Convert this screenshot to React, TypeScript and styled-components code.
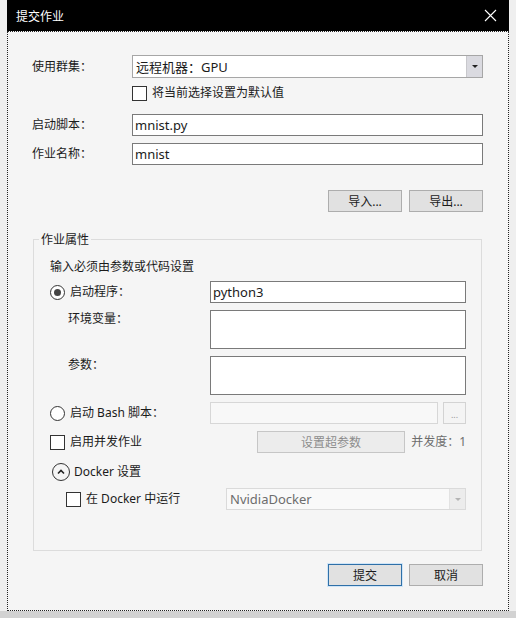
import React from "react";
import styled, { createGlobalStyle } from "styled-components";

const Global = createGlobalStyle`
  html, body { margin: 0; padding: 0; }
  body {
    width: 516px;
    height: 618px;
    overflow: hidden;
    background: linear-gradient(to bottom, #efefef 0, #efefef 611px, #d2d2d2 611px);
    font-family: "Noto Sans", "Noto Sans CJK SC", sans-serif;
    font-size: 12px;
    color: #1b1b1b;
  }
  * { box-sizing: border-box; }
`;

const Page = styled.div`
  padding-left: 7px;
  height: 618px;
`;

const Window = styled.div`
  width: 502px;
  display: flex;
  flex-direction: column;
`;

const TitleBar = styled.div`
  height: 31px;
  background: #000;
  display: flex;
  align-items: center;
  justify-content: space-between;
  padding: 0 12px 0 9px;
  color: #fff;
  font-size: 12px;
`;

const Body = styled.div`
  height: 580px;
  background: #f5f5f5;
  border: 1px dotted #222;
  padding: 23px 25px 0 24px;
  display: flex;
  flex-direction: column;
`;

const FormRow = styled.div<{ $mt?: number }>`
  display: flex;
  align-items: center;
  margin-top: ${(p) => p.$mt ?? 0}px;
`;

const Label = styled.div<{ $w?: number }>`
  width: ${(p) => p.$w ?? 100}px;
  flex: none;
  line-height: 16px;
  white-space: nowrap;
`;

const Combo = styled.div<{ $disabled?: boolean; $w?: number }>`
  height: ${(p) => (p.$disabled ? 22 : 23)}px;
  width: ${(p) => (p.$w ? `${p.$w}px` : "auto")};
  flex: ${(p) => (p.$w ? "none" : "1")};
  display: flex;
  align-items: stretch;
  background: ${(p) => (p.$disabled ? "#f9f9f9" : "#fff")};
  border: 1px solid ${(p) => (p.$disabled ? "#dadada" : "#a6a6a6")};
  color: ${(p) => (p.$disabled ? "#6d6d6d" : "#1b1b1b")};
`;

const ComboText = styled.div`
  flex: 1;
  padding-left: 3px;
  display: flex;
  align-items: center;
  font-size: 13px;
`;

const ComboButton = styled.div<{ $disabled?: boolean }>`
  width: 16px;
  display: flex;
  align-items: center;
  justify-content: center;
  background: ${(p) => (p.$disabled ? "#ececec" : "#dadae0")};
  border-left: 1px solid ${(p) => (p.$disabled ? "#e2e2e2" : "#c8c8cc")};
`;

const Arrow = styled.div<{ $disabled?: boolean }>`
  width: 0;
  height: 0;
  border-left: 3px solid transparent;
  border-right: 3px solid transparent;
  border-top: 3px solid ${(p) => (p.$disabled ? "#b4b4b4" : "#222")};
`;

const Input = styled.div<{ $h?: number; $disabled?: boolean; $w?: number }>`
  height: ${(p) => p.$h ?? 22}px;
  width: ${(p) => (p.$w ? `${p.$w}px` : "auto")};
  flex: ${(p) => (p.$w ? "none" : "1")};
  background: ${(p) => (p.$disabled ? "#f8f8f8" : "#fff")};
  border: 1px solid ${(p) => (p.$disabled ? "#d7d7d7" : "#7a7a7a")};
  padding-left: 2px;
  display: flex;
  align-items: center;
  font-size: 13px;
`;

const Check = styled.span`
  width: 15px;
  height: 15px;
  flex: none;
  background: #fff;
  border: 1px solid #333;
`;

const Radio = styled.span<{ $checked?: boolean }>`
  width: 15px;
  height: 15px;
  flex: none;
  border-radius: 50%;
  border: 1px solid #333;
  background: #fff;
  display: flex;
  align-items: center;
  justify-content: center;
  &::after {
    content: "";
    width: 7px;
    height: 7px;
    border-radius: 50%;
    background: ${(p) => (p.$checked ? "#444" : "transparent")};
  }
`;

const Choice = styled.div<{ $indent?: number; $w?: number; $gap?: number }>`
  display: flex;
  align-items: center;
  gap: ${(p) => p.$gap ?? 5}px;
  padding-left: ${(p) => p.$indent ?? 0}px;
  width: ${(p) => (p.$w ? `${p.$w}px` : "auto")};
  flex: none;
  line-height: 16px;
  white-space: nowrap;
`;

const ButtonRow = styled.div<{ $mt: number }>`
  display: flex;
  justify-content: flex-end;
  gap: 7px;
  margin-top: ${(p) => p.$mt}px;
`;

const Button = styled.div<{ $default?: boolean; $disabled?: boolean; $w?: number }>`
  width: ${(p) => p.$w ?? 74}px;
  height: 22px;
  display: flex;
  align-items: center;
  justify-content: center;
  background: ${(p) => (p.$disabled ? "#ececec" : "#e1e1e1")};
  border: 1px solid
    ${(p) => (p.$default ? "#2f70a8" : p.$disabled ? "#c6c6c6" : "#adadad")};
  box-shadow: ${(p) => (p.$default ? "0 0 0 1px #cfe5f8" : "none")};
  color: ${(p) => (p.$disabled ? "#8c8c8c" : "#1b1b1b")};
  font-size: 12px;
`;

const Group = styled.fieldset`
  margin: 19px 1px 0 1px;
  height: 320px;
  border: 1px solid #dcdcdc;
  padding: 0 15px 0 16px;
  min-width: 0;
  display: flex;
  flex-direction: column;
`;

const Legend = styled.legend`
  padding: 0 2px;
  margin-left: -11px;
  line-height: 17px;
  font-size: 12px;
`;

const Hint = styled.div`
  margin-top: 11px;
  line-height: 16px;
`;

const Rows = styled.div`
  margin-top: 6px;
  display: flex;
  flex-direction: column;
  gap: 7px;
`;

const Row = styled.div<{ $top?: boolean; $between?: boolean; $mt?: number }>`
  display: flex;
  align-items: ${(p) => (p.$top ? "flex-start" : "center")};
  justify-content: ${(p) => (p.$between ? "space-between" : "flex-start")};
  margin-top: ${(p) => p.$mt ?? 0}px;
`;

const SubLabel = styled.div`
  width: 160px;
  flex: none;
  padding: 1px 0 0 18px;
  line-height: 16px;
`;

const Browse = styled.div`
  width: 23px;
  height: 22px;
  margin-left: 5px;
  flex: none;
  border: 1px solid #d3d3d3;
  background: #f4f4f4;
  color: #9a9a9a;
  display: flex;
  align-items: center;
  justify-content: center;
  font-size: 9px;
  padding-top: 2px;
`;

const Tools = styled.div`
  display: flex;
  align-items: center;
  gap: 6px;
`;

const Muted = styled.span`
  color: #6d6d6d;
  line-height: 16px;
`;

const Expander = styled.span`
  width: 18px;
  height: 18px;
  border-radius: 50%;
  border: 1px solid #333;
  display: flex;
  align-items: center;
  justify-content: center;
  flex: none;
`;

export default function App() {
  return (
    <>
      <Global />
      <Page>
        <Window>
          <TitleBar>
            <span>提交作业</span>
            <svg width="13" height="13" viewBox="0 0 13 13">
              <path d="M1 1L12 12M12 1L1 12" stroke="#fff" strokeWidth="1.1" />
            </svg>
          </TitleBar>
          <Body>
            <FormRow>
              <Label>使用群集：</Label>
              <Combo>
                <ComboText>远程机器：GPU</ComboText>
                <ComboButton>
                  <Arrow />
                </ComboButton>
              </Combo>
            </FormRow>
            <FormRow $mt={7}>
              <Label />
              <Choice>
                <Check />
                <span>将当前选择设置为默认值</span>
              </Choice>
            </FormRow>
            <FormRow $mt={13}>
              <Label>启动脚本：</Label>
              <Input>mnist.py</Input>
            </FormRow>
            <FormRow $mt={7}>
              <Label>作业名称：</Label>
              <Input>mnist</Input>
            </FormRow>
            <ButtonRow $mt={25}>
              <Button>导入...</Button>
              <Button>导出...</Button>
            </ButtonRow>
            <Group>
              <Legend>作业属性</Legend>
              <Hint>输入必须由参数或代码设置</Hint>
              <Rows>
                <Row>
                  <Choice $w={160}>
                    <Radio $checked />
                    <span>启动程序：</span>
                  </Choice>
                  <Input>python3</Input>
                </Row>
                <Row $top>
                  <SubLabel>环境变量：</SubLabel>
                  <Input $h={39} />
                </Row>
                <Row $top>
                  <SubLabel>参数：</SubLabel>
                  <Input $h={39} />
                </Row>
                <Row>
                  <Choice $w={160}>
                    <Radio />
                    <span>启动 Bash 脚本：</span>
                  </Choice>
                  <Input $disabled />
                  <Browse>...</Browse>
                </Row>
                <Row $between>
                  <Choice>
                    <Check />
                    <span>启用并发作业</span>
                  </Choice>
                  <Tools>
                    <Button $disabled $w={148}>
                      设置超参数
                    </Button>
                    <Muted>并发度：1</Muted>
                  </Tools>
                </Row>
                <Row $mt={3}>
                  <Choice $indent={2} $gap={4}>
                    <Expander>
                      <svg width="10" height="10" viewBox="0 0 10 10">
                        <path d="M2 6.5L5 3.5L8 6.5" stroke="#222" strokeWidth="1.6" fill="none" />
                      </svg>
                    </Expander>
                    <span>Docker 设置</span>
                  </Choice>
                </Row>
                <Row $between>
                  <Choice $indent={16}>
                    <Check />
                    <span>在 Docker 中运行</span>
                  </Choice>
                  <Combo $disabled $w={240}>
                    <ComboText>NvidiaDocker</ComboText>
                    <ComboButton $disabled>
                      <Arrow $disabled />
                    </ComboButton>
                  </Combo>
                </Row>
              </Rows>
            </Group>
            <ButtonRow $mt={13}>
              <Button $default>提交</Button>
              <Button>取消</Button>
            </ButtonRow>
          </Body>
        </Window>
      </Page>
    </>
  );
}
